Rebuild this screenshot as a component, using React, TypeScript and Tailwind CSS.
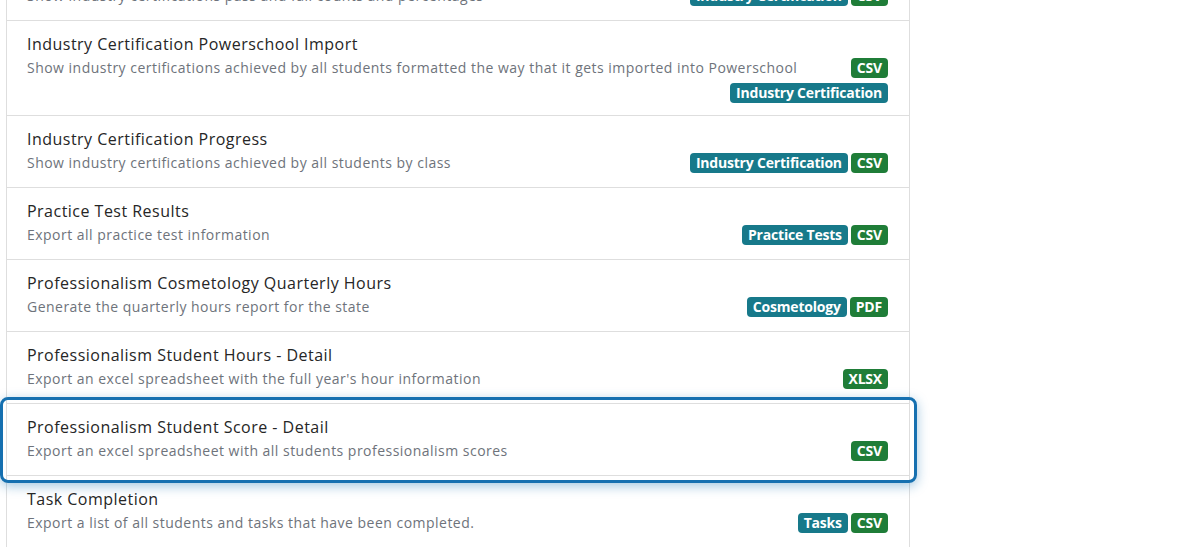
import React from 'react';

type Report = {
    title: string;
    description: string;
    badges: string[][];
    selected?: boolean;
};

const TEAL = ['Industry Certification', 'Practice Tests', 'Cosmetology', 'Tasks'];

const reports: Report[] = [
    {
        title: 'Industry Certification Pass Rates',
        description: 'Show industry certifications pass and fail counts and percentages',
        badges: [['Industry Certification', 'CSV']],
    },
    {
        title: 'Industry Certification Powerschool Import',
        description: 'Show industry certifications achieved by all students formatted the way that it gets imported into Powerschool',
        badges: [['CSV'], ['Industry Certification']],
    },
    {
        title: 'Industry Certification Progress',
        description: 'Show industry certifications achieved by all students by class',
        badges: [['Industry Certification', 'CSV']],
    },
    {
        title: 'Practice Test Results',
        description: 'Export all practice test information',
        badges: [['Practice Tests', 'CSV']],
    },
    {
        title: 'Professionalism Cosmetology Quarterly Hours',
        description: 'Generate the quarterly hours report for the state',
        badges: [['Cosmetology', 'PDF']],
    },
    {
        title: 'Professionalism Student Hours - Detail',
        description: "Export an excel spreadsheet with the full year's hour information",
        badges: [['XLSX']],
    },
    {
        title: 'Professionalism Student Score - Detail',
        description: 'Export an excel spreadsheet with all students professionalism scores',
        badges: [['CSV']],
        selected: true,
    },
    {
        title: 'Task Completion',
        description: 'Export a list of all students and tasks that have been completed.',
        badges: [['Tasks', 'CSV']],
    },
];

const Badge: React.FC<{ label: string }> = ({ label }) => (
    <span
        className={`inline-flex h-5 items-center rounded-[4px] px-[6px] text-[14px] font-bold leading-none tracking-[-0.2px] text-white ${TEAL.includes(label) ? 'bg-[#17798a]' : 'bg-[#1f7d38]'}`}
    >
        {label}
    </span>
);

const BadgeLine: React.FC<{ labels: string[] }> = ({ labels }) => (
    <div className="flex shrink-0 gap-[3px]">
        {labels.map((b) => (
            <Badge key={b} label={b} />
        ))}
    </div>
);

const ReportRow: React.FC<{ report: Report }> = ({ report }) => {
    const [first, ...rest] = report.badges;
    return (
        <div className="relative border-b border-[#dedede]">
            {report.selected && (
                <div className="pointer-events-none absolute -left-[7px] -right-[8px] -top-[7px] -bottom-[8px] rounded-lg border-[3px] border-[#1670b0] shadow-[0_3px_12px_rgba(22,112,176,0.4)]" />
            )}
            <div className="relative pl-5 pr-[21px] pt-[11px] pb-[12px] tracking-[0.03em]">
                <div className="text-[16px] leading-6 text-[#262626]">{report.title}</div>
                <div className="flex items-center justify-between gap-4">
                    <div className="whitespace-nowrap text-[14px] leading-6 text-[#6e737b]">{report.description}</div>
                    <BadgeLine labels={first} />
                </div>
                {rest.map((line, i) => (
                    <div key={i} className="mt-[3px] flex justify-end">
                        <BadgeLine labels={line} />
                    </div>
                ))}
            </div>
        </div>
    );
};

export default function App() {
    return (
        <div className="h-[547px] w-[1184px] overflow-hidden bg-white font-['Open_Sans',sans-serif]">
            <div className="-mt-[51px] ml-[6px] w-[904px] border-x border-[#dedede]">
                {reports.map((r) => (
                    <ReportRow key={r.title} report={r} />
                ))}
            </div>
        </div>
    );
}
